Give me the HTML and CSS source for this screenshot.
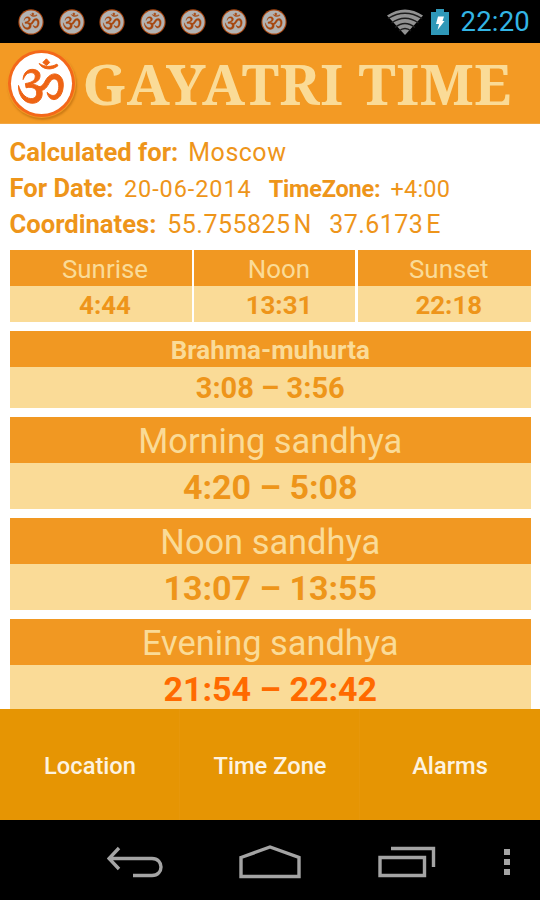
FILE: index.html
```html
<!DOCTYPE html>
<html>

<head>
    <meta charset="utf-8" />
    <meta name="viewport" content="width=device-width, initial-scale=1" />
    <title>Gayatri Time</title>
    <link rel="stylesheet" href="styles.css">
</head>

<body>
    <svg class="defs" width="0" height="0">
        <symbol id="om" viewBox="0 0 210 210">
            <circle class="om-ring" cx="105" cy="105" r="102" />
            <circle class="om-disc" cx="105" cy="105" r="93" />
            <g class="om-sign">
                <path d="M49 93C50 72 63 61 79 62C94 63 103 73 100 86C98 98 84 104 71 107C90 107 105 115 107 132C109 151 95 167 74 165C52 163 34 142 35 111C41 130 53 149 72 151C86 152 92 141 90 130C88 120 76 114 58 118L56 105C72 103 85 97 86 85C87 75 79 71 70 72C59 73 54 82 49 93Z" />
                <path d="M92 114C108 117 111 106 119 93C127 80 140 73 152 77C167 82 173 98 171 116C169 139 156 154 143 154C132 154 125 146 122 132C131 141 141 144 148 139C158 132 160 111 155 99C150 89 140 89 133 97C125 107 119 127 102 126Z" />
                <path d="M98 44C106 62 136 67 155 51L152 46C136 55 116 56 98 44Z" />
                <path d="M120 30L130 41L120 50L109 41Z" />
            </g>
        </symbol>
    </svg>

    <div class="status-bar">
        <div class="notifications">
            <svg class="om-small"><use href="#om" /></svg>
            <svg class="om-small"><use href="#om" /></svg>
            <svg class="om-small"><use href="#om" /></svg>
            <svg class="om-small"><use href="#om" /></svg>
            <svg class="om-small"><use href="#om" /></svg>
            <svg class="om-small"><use href="#om" /></svg>
            <svg class="om-small"><use href="#om" /></svg>
        </div>
        <svg class="wifi" viewBox="0 0 36 26">
            <path class="wifi-fan" d="M18 26L0 6.500Q18 -5.500 36 6.500Z" />
            <path class="wifi-gap" d="M1 9.500Q18 -1 35 9.500M4.500 14Q18 4.500 31.500 14M8 18.500Q18 10.500 28 18.500M12 22Q18 17 24 22" />
        </svg>
        <svg class="battery" viewBox="0 0 18 26">
            <path class="battery-body" d="M5 0h8v3h5v23H0V3h5z" />
            <path class="battery-bolt" d="M7 7.500h6l-1.500 4.500h2L6.500 21l1.500-6H5z" />
        </svg>
        <span class="clock">22:20</span>
    </div>

    <div class="header">
        <svg class="logo"><use href="#om" /></svg>
        <h1 class="title">GAYATRI TIME</h1>
    </div>

    <div class="content">
        <div class="info">
            <b>Calculated for:</b><span class="city">Moscow</span>
        </div>
        <div class="info">
            <b>For Date:</b><span class="date">20-06-2014</span><b class="zone-label">TimeZone:</b><span class="zone">+4:00</span>
        </div>
        <div class="info">
            <b>Coordinates:</b><span class="coord">55.755825</span><span class="side">N</span><span class="coord lon">37.6173</span><span class="side">E</span>
        </div>

        <div class="sun">
            <div class="cell">
                <div class="name">Sunrise</div>
                <div class="time">4:44</div>
            </div>
            <div class="cell">
                <div class="name">Noon</div>
                <div class="time">13:31</div>
            </div>
            <div class="cell">
                <div class="name">Sunset</div>
                <div class="time">22:18</div>
            </div>
        </div>

        <div class="block brahma">
            <div class="name">Brahma-muhurta</div>
            <div class="time">3:08 – 3:56</div>
        </div>
        <div class="block">
            <div class="name">Morning sandhya</div>
            <div class="time">4:20 – 5:08</div>
        </div>
        <div class="block">
            <div class="name">Noon sandhya</div>
            <div class="time">13:07 – 13:55</div>
        </div>
        <div class="block">
            <div class="name">Evening sandhya</div>
            <div class="time now">21:54 – 22:42</div>
        </div>
    </div>

    <div class="menu">
        <div class="item">Location</div>
        <div class="item">Time Zone</div>
        <div class="item">Alarms</div>
    </div>

    <div class="nav-bar">
        <svg class="back" viewBox="0 0 56 32">
            <path d="M12 2L2 12.500L12 23M2 12.500H45C57 12.500 57 29.500 45 29.500H26" />
        </svg>
        <svg class="home" viewBox="0 0 62 34">
            <path d="M2 12.500L31 2L60 12.500V31.500H2Z" />
        </svg>
        <svg class="recent" viewBox="0 0 58 32">
            <path d="M2 11.500H46.500V29.500H2ZM13 2.500H55.500V21" />
        </svg>
        <svg class="more" viewBox="0 0 6 26">
            <path d="M0 0h6v6H0zM0 10h6v6H0zM0 20h6v6H0z" />
        </svg>
    </div>
</body>

</html>
```
FILE: styles.css
```css
body {
    display: flex;
    flex-direction: column;
    width: 540px;
    height: 900px;
    margin: 0;
    overflow: hidden;
    background: #fff;
    color: #ee951a;
    font-family: Roboto, "Liberation Sans", sans-serif;
}

.defs {
    position: absolute;
}

.status-bar {
    display: flex;
    flex: none;
    align-items: center;
    box-sizing: border-box;
    height: 43px;
    padding: 0 10px 0 18px;
    background: #000;
}

.notifications {
    display: flex;
    gap: 14.5px;
    margin-right: auto;
}

.om-small {
    width: 26px;
    height: 26px;
    opacity: 0.7;
}

.om-ring {
    fill: #f4681a;
}

.om-disc {
    fill: #fff;
}

.om-sign {
    fill: #ee6414;
    stroke: #ee6414;
    stroke-width: 3;
    stroke-linejoin: round;
}

.wifi {
    width: 36px;
    height: 26px;
    margin-right: 8px;
}

.wifi-fan {
    fill: #929292;
}

.wifi-gap {
    fill: none;
    stroke: #1c1c1c;
    stroke-width: 1.3;
}

.battery {
    width: 18px;
    height: 26px;
    margin-right: 12px;
}

.battery-body {
    fill: #2f98b8;
}

.battery-bolt {
    fill: #fff;
}

.clock {
    color: #33b5e5;
    font-size: 27.5px;
    letter-spacing: 0.2px;
    line-height: 47px;
}

.header {
    display: flex;
    flex: none;
    align-items: center;
    box-sizing: border-box;
    height: 81px;
    padding-left: 7px;
    background: #f39a24;
    border-bottom: 1px solid #f2a744;
}

.logo {
    width: 69px;
    height: 69px;
    margin-right: 6.5px;
    border-radius: 50%;
    box-shadow: 1px 2px 2px rgba(150, 80, 0, 0.4);
}

.title {
    margin: 0;
    color: #fadb97;
    font: bold 57px/80px "Noto Serif", "DejaVu Serif Condensed", "DejaVu Serif", serif;
    letter-spacing: 0.35px;
    white-space: nowrap;
}

.content {
    flex: 1;
    min-height: 0;
    overflow: hidden;
    padding: 10px 9px 0 9.5px;
}

.info {
    display: flex;
    align-items: baseline;
    height: 36px;
    font-size: 25.6px;
    line-height: 36px;
    white-space: nowrap;
}

.city {
    margin-left: 10px;
    font-size: 25px;
    letter-spacing: 0.5px;
}

.date {
    margin-left: 10.5px;
    font-size: 23.5px;
    letter-spacing: 0.9px;
}

.zone-label {
    margin-left: 17px;
    font-size: 23.5px;
    letter-spacing: -0.2px;
}

.zone {
    margin-left: 10px;
    font-size: 23.5px;
    letter-spacing: 0.2px;
}

.coord {
    margin-left: 11px;
    font-size: 25px;
    letter-spacing: 0.45px;
}

.side {
    margin-left: 3px;
    font-size: 25px;
}

.lon {
    margin-left: 18px;
}

.sun {
    display: grid;
    grid-template-columns: 182px 161px 1fr;
    gap: 2.5px;
    margin-top: 8px;
    text-align: center;
}

.name {
    background: #f19822;
    color: #fadb97;
}

.time {
    background: #fadb97;
    font-weight: bold;
}

.cell .name,
.cell .time {
    height: 36px;
    padding-left: 9px;
    font-size: 25.9px;
    line-height: 38px;
}

.block {
    margin-top: 9px;
    text-align: center;
    font-size: 34.4px;
    line-height: 48px;
}

.block .name,
.block .time {
    height: 46px;
}

.block .time {
    font-size: 34px;
}

.brahma .name {
    height: 36px;
    font-size: 25.9px;
    font-weight: bold;
    line-height: 38px;
}

.brahma .time {
    height: 41px;
    font-size: 29px;
    line-height: 43px;
}

.block .now {
    color: #ff6a00;
}

.menu {
    display: grid;
    flex: none;
    grid-template-columns: repeat(3, 1fr);
    height: 111px;
    background: #e69503;
    color: #fdf3e0;
    font-size: 23.7px;
    font-weight: 500;
    line-height: 114px;
    text-align: center;
}

.item + .item {
    box-shadow: -1px 0 #e7970a;
}

.nav-bar {
    display: flex;
    flex: none;
    align-items: center;
    box-sizing: border-box;
    height: 80px;
    padding: 3px 0 0 107px;
    background: #000;
}

.nav-bar path {
    fill: none;
    stroke: #a4a4a4;
    stroke-width: 3.4;
}

.back {
    width: 56px;
    height: 32px;
}

.home {
    width: 62px;
    height: 34px;
    margin-left: 76px;
}

.recent {
    width: 58px;
    height: 32px;
    margin-left: 77px;
}

.more {
    width: 6px;
    height: 26px;
    margin-left: 68px;
}

.nav-bar .more path {
    fill: #a4a4a4;
    stroke: none;
}
```
